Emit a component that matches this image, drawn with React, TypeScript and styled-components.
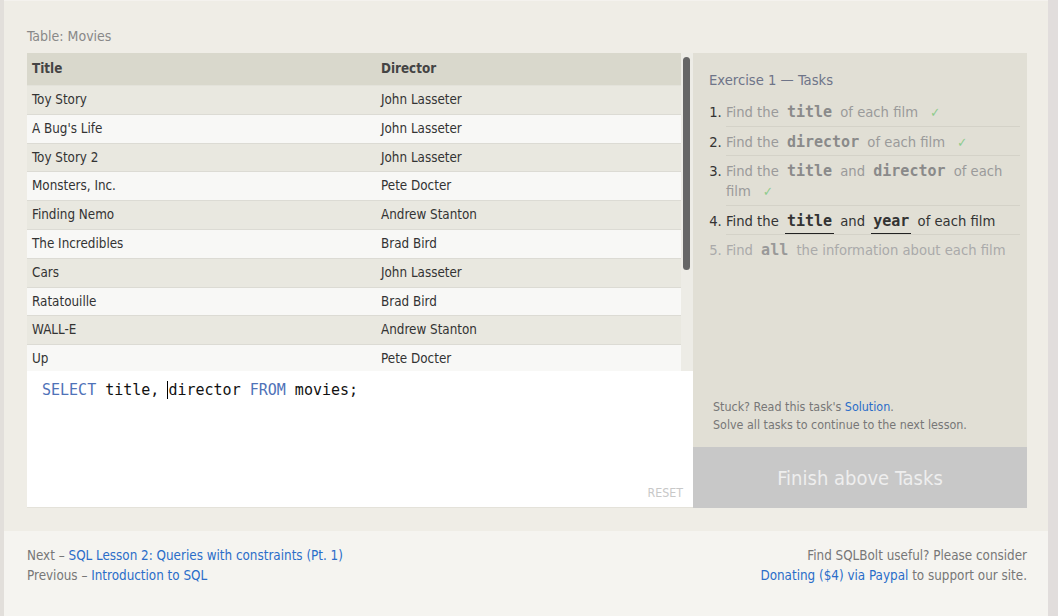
import React from "react";
import styled, { createGlobalStyle } from "styled-components";

const Global = createGlobalStyle`
  html, body { margin: 0; padding: 0; }
  body {
    background: #f5f4f0;
    font-family: "DejaVu Sans Condensed", "DejaVu Sans", sans-serif;
    font-stretch: condensed;
  }
`;

const Frame = styled.div`
  display: flex;
  min-height: 616px;
  border-left: 4px solid #e2dfdb;
  border-right: 10px solid #e1dddc;
  box-sizing: border-box;
`;

const Main = styled.div`
  flex: 1;
  display: flex;
  flex-direction: column;
`;

const Lesson = styled.section`
  background: #efede6;
  border-top: 1px solid #f4f2ee;
  padding: 25px 21px 23px 23px;
`;

const TableLabel = styled.div`
  font-size: 14px;
  line-height: 20px;
  color: #888;
  margin-bottom: 7px;
`;

const Widget = styled.div`
  display: flex;
  height: 455px;
`;

const LeftCol = styled.div`
  width: 666px;
  display: flex;
  flex-direction: column;
`;

const TableArea = styled.div`
  height: 318px;
  display: flex;
  background: #edece6;
`;

const TableScroll = styled.div`
  flex: 1;
  overflow: hidden;
`;

const ScrollTrack = styled.div`
  width: 12px;
  background: #edece6;
  padding: 4px 3px 0 2px;
  box-sizing: border-box;
`;

const ScrollThumb = styled.div`
  height: 213px;
  background: #666;
  border-radius: 4px;
`;

const Table = styled.table`
  width: 100%;
  border-collapse: collapse;
  font-size: 13.33px;
  color: #333;
`;

const Th = styled.th<{ $w?: string }>`
  background: #d9d8cc;
  text-align: left;
  font-weight: bold;
  font-size: 13.33px;
  color: #444;
  padding: 8px 5px 8px;
  line-height: 16px;
  border-bottom: 1px solid #e3e2da;
  width: ${(p) => p.$w || "auto"};
`;

const Tr = styled.tr<{ $odd: boolean }>`
  background: ${(p) => (p.$odd ? "#e9e8e0" : "#f8f8f6")};
`;

const Td = styled.td`
  padding: 6px 5px;
  line-height: 15.8px;
  border-bottom: 1px solid #dcdbd4;
`;

const Editor = styled.div`
  flex: 1;
  background: #fff;
  border-bottom: 1px solid #e4e2da;
  display: flex;
  flex-direction: column;
  padding: 10px 10px 7px 15px;
`;

const Code = styled.div`
  font-family: "DejaVu Sans Mono", monospace;
  font-size: 15px;
  line-height: 18px;
  color: #111;
  white-space: pre;
`;

const Kw = styled.span`
  color: #4f72b8;
`;

const Caret = styled.span`
  border-left: 1px solid #000;
  margin-left: -1px;
`;

const Reset = styled.div`
  margin-top: auto;
  align-self: flex-end;
  font-size: 12.3px;
  color: #c8c8c8;
  line-height: 14px;
`;

const Panel = styled.div`
  flex: 1;
  background: #e1dfd5;
  display: flex;
  flex-direction: column;
`;

const PanelBody = styled.div`
  padding: 17px 7px 0 16px;
`;

const ExTitle = styled.div`
  font-size: 14.67px;
  line-height: 20px;
  color: #6e7488;
  margin-bottom: 7px;
`;

const TaskList = styled.ol`
  margin: 0;
  padding-left: 17px;
  font-size: 14.67px;
  line-height: 20px;
`;

type State = "done" | "current" | "todo";

const Task = styled.li<{ $state: State }>`
  padding: 5px 0 4px;
  border-bottom: 1px solid #d4d2c8;
  color: ${(p) => (p.$state === "done" ? "#9a9a9a" : p.$state === "current" ? "#333" : "#aaa")};
  &::marker {
    color: ${(p) => (p.$state === "todo" ? "#aaa" : "#333")};
  }
  &:nth-child(even) { padding-bottom: 3px; }
  &:last-child { border-bottom: none; }
`;

const TaskCode = styled.code<{ $state: State }>`
  font-family: "DejaVu Sans Mono", monospace;
  font-weight: bold;
  font-size: 15px;
  line-height: 14px;
  padding: 0 2px 3px;
  margin: 0 2px;
  color: ${(p) => (p.$state === "current" ? "#333" : p.$state === "todo" ? "#999" : "#8a8a8a")};
  border-bottom: ${(p) => (p.$state === "current" ? "1px solid #222" : "none")};
`;

const Check = styled.span`
  color: #8ccb8c;
  font-size: 13px;
  line-height: 10px;
  margin-left: 8px;
`;

const Help = styled.div`
  margin-top: auto;
  padding: 0 16px 13px 20px;
  font-size: 12.4px;
  line-height: 18px;
  color: #777;
`;

const Link = styled.a`
  color: #2a6dc9;
  text-decoration: none;
`;

const Finish = styled.div`
  height: 61px;
  background: #c8c8c8;
  color: #eee;
  font-size: 20px;
  display: flex;
  align-items: center;
  justify-content: center;
`;

const Footer = styled.footer`
  flex: 1;
  background: #f5f4f0;
  padding: 15px 21px 0 23px;
  display: flex;
  justify-content: space-between;
  font-size: 13.33px;
  line-height: 20px;
  color: #777;
`;

const FootCol = styled.div<{ $right?: boolean }>`
  text-align: ${(p) => (p.$right ? "right" : "left")};
`;

const movies: [string, string][] = [
  ["Toy Story", "John Lasseter"],
  ["A Bug's Life", "John Lasseter"],
  ["Toy Story 2", "John Lasseter"],
  ["Monsters, Inc.", "Pete Docter"],
  ["Finding Nemo", "Andrew Stanton"],
  ["The Incredibles", "Brad Bird"],
  ["Cars", "John Lasseter"],
  ["Ratatouille", "Brad Bird"],
  ["WALL-E", "Andrew Stanton"],
  ["Up", "Pete Docter"],
  ["Toy Story 3", "Lee Unkrich"],
  ["Cars 2", "John Lasseter"],
  ["Brave", "Brenda Chapman"],
  ["Monsters University", "Dan Scanlon"],
];

export default function App() {
  return (
    <>
      <Global />
      <Frame>
        <Main>
          <Lesson>
            <TableLabel>Table: Movies</TableLabel>
            <Widget>
              <LeftCol>
                <TableArea>
                  <TableScroll>
                    <Table>
                      <thead>
                        <tr>
                          <Th $w="339px">Title</Th>
                          <Th>Director</Th>
                        </tr>
                      </thead>
                      <tbody>
                        {movies.map(([t, d], i) => (
                          <Tr key={t} $odd={i % 2 === 0}>
                            <Td>{t}</Td>
                            <Td>{d}</Td>
                          </Tr>
                        ))}
                      </tbody>
                    </Table>
                  </TableScroll>
                  <ScrollTrack>
                    <ScrollThumb />
                  </ScrollTrack>
                </TableArea>
                <Editor>
                  <Code>
                    <Kw>SELECT</Kw> title, <Caret />director <Kw>FROM</Kw> movies;
                  </Code>
                  <Reset>RESET</Reset>
                </Editor>
              </LeftCol>
              <Panel>
                <PanelBody>
                  <ExTitle>Exercise 1 — Tasks</ExTitle>
                  <TaskList>
                    <Task $state="done">
                      Find the <TaskCode $state="done">title</TaskCode> of each film <Check>✓</Check>
                    </Task>
                    <Task $state="done">
                      Find the <TaskCode $state="done">director</TaskCode> of each film <Check>✓</Check>
                    </Task>
                    <Task $state="done">
                      Find the <TaskCode $state="done">title</TaskCode> and{" "}
                      <TaskCode $state="done">director</TaskCode> of each film <Check>✓</Check>
                    </Task>
                    <Task $state="current">
                      Find the <TaskCode $state="current">title</TaskCode> and{" "}
                      <TaskCode $state="current">year</TaskCode> of each film
                    </Task>
                    <Task $state="todo">
                      Find <TaskCode $state="todo">all</TaskCode> the information about each film
                    </Task>
                  </TaskList>
                </PanelBody>
                <Help>
                  Stuck? Read this task's <Link href="#">Solution</Link>.
                  <br />
                  Solve all tasks to continue to the next lesson.
                </Help>
                <Finish>Finish above Tasks</Finish>
              </Panel>
            </Widget>
          </Lesson>
          <Footer>
            <FootCol>
              Next – <Link href="#">SQL Lesson 2: Queries with constraints (Pt. 1)</Link>
              <br />
              Previous – <Link href="#">Introduction to SQL</Link>
            </FootCol>
            <FootCol $right>
              Find SQLBolt useful? Please consider
              <br />
              <Link href="#">Donating ($4) via Paypal</Link> to support our site.
            </FootCol>
          </Footer>
        </Main>
      </Frame>
    </>
  );
}
